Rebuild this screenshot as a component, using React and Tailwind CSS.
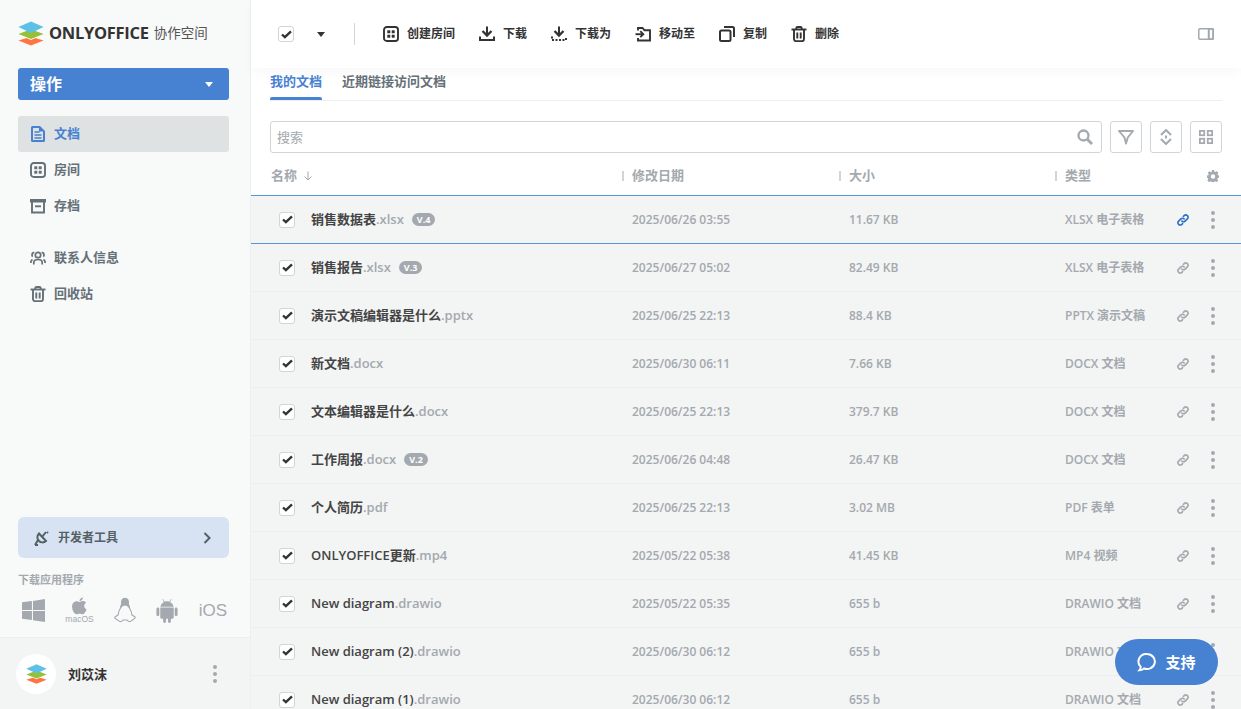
import React from "react";

const Logo = ({ className }) => (
  <svg viewBox="0 0 26 24" className={className}>
    <path d="M13 15.200 25.600 19 13 24 .4 19z" fill="#FF7541" />
    <path d="M13 8.200 25.600 13 13 18.400.4 13z" fill="#fff" />
    <path d="M13 7.800 25.600 12.600 13 17.600.4 12.600z" fill="#95C038" />
    <path d="M13 0 25.600 5.600 13 11.400.4 5.600z" fill="#5DC0E8" />
  </svg>
);

const S = ({ children, className = "w-4 h-4", sw = 2 }) => (
  <svg viewBox="0 0 16 16" fill="none" stroke="currentColor" strokeWidth={sw} className={className}>{children}</svg>
);

const DocIcon = () => (
  <svg viewBox="0 0 16 16" className="w-4 h-4">
    <path d="M2.500 0h7.500L15 5v9.500a1.500 1.500 0 0 1-1.500 1.500h-11A1.500 1.500 0 0 1 1 14.500v-13A1.500 1.500 0 0 1 2.500 0z" fill="#4781d1" />
    <path d="M3 2h6v3.500h4V14H3z" fill="#dfe2e3" />
    <path d="M4.500 6h5M4.500 9h7M4.500 12h7" stroke="#4781d1" strokeWidth="1.500" />
  </svg>
);
const RoomIcon = () => (
  <S sw={1.900}>
    <rect x="1" y="1" width="14" height="14" rx="2.800" />
    <g fill="currentColor" stroke="none"><rect x="4.300" y="4.300" width="3" height="3" rx=".4" /><rect x="8.700" y="4.300" width="3" height="3" rx=".4" /><rect x="4.300" y="8.700" width="3" height="3" rx=".4" /><rect x="8.700" y="8.700" width="3" height="3" rx=".4" /></g>
  </S>
);
const ArchiveIcon = () => (
  <S sw={1.900}>
    <path d="M0 1h16v3.500H0z" fill="currentColor" stroke="none" />
    <path d="M2 4v10.500h12V4" /><path d="M5 8.300h6" />
  </S>
);
const ContactIcon = () => (
  <S sw={1.700}>
    <circle cx="8" cy="5" r="2.700" />
    <path d="M3.800 14.500v-2c0-2 1.700-3 4.200-3s4.200 1 4.200 3v2" />
    <path d="M4.300 2.300C3 2.500 2 3.500 2 5c0 .7.300 1.300.7 1.700M11.700 2.300C13 2.500 14 3.500 14 5c0 .7-.3 1.300-.7 1.700M.8 13c0-1.800.6-3 1.700-3.500M15.200 13c0-1.800-.6-3-1.700-3.500" />
  </S>
);
const TrashIcon = () => (
  <S sw={1.900}>
    <path d="M.5 3.500h15" /><path d="M5.300 3V2.200A1.200 1.200 0 0 1 6.500 1h3a1.200 1.200 0 0 1 1.200 1.200V3" />
    <path d="M3 4v9a2.200 2.200 0 0 0 2.200 2.200h5.600A2.200 2.200 0 0 0 13 13V4M6.300 6.500v6M9.700 6.500v6" />
  </S>
);
const DownIcon = ({ dotted }) => (
  <S sw={2}>
    <path d="M8 .5v8" /><path d="M3.500 5 8 9.500 12.500 5" strokeWidth="2.300" />
    <path d="M1 10.500v3.500h14v-3.500" strokeDasharray={dotted ? "2 1.500" : undefined} />
  </S>
);
const MoveIcon = () => (
  <S sw={1.900}>
    <path d="M3 4.500V2h4.500l2 2.300H15v10.200H3V12" /><path d="M.5 8.200h7.500" /><path d="M5.300 5.200 8.300 8.200l-3 3" />
  </S>
);
const CopyIcon = () => (
  <S sw={2}>
    <rect x="1" y="4.500" width="10.500" height="10.500" rx="1.500" /><path d="M5 1h8.500A1.500 1.500 0 0 1 15 2.500V11" />
  </S>
);
const LinkIcon = ({ active }) => (
  <svg viewBox="0 0 16 16" fill="none" strokeWidth="2.100" strokeLinecap="round" stroke={active ? "#2e6fc8" : "#a3a9ae"} className="w-3 h-3">
    <path d="M6.500 9.500a3 3 0 0 0 4.300 0l3-3a3 3 0 0 0-4.300-4.300L8.500 3.200" />
    <path d="M9.500 6.500a3 3 0 0 0-4.300 0l-3 3a3 3 0 0 0 4.300 4.300l1-1" />
  </svg>
);
const Dots = () => (
  <span className="flex flex-col gap-[3px] items-center">
    <i className="block w-1 h-1 rounded-full bg-[#a3a9ae]" /><i className="block w-1 h-1 rounded-full bg-[#a3a9ae]" /><i className="block w-1 h-1 rounded-full bg-[#a3a9ae]" />
  </span>
);
const Check = () => (
  <span className="w-4 h-4 rounded-[3px] border border-[#d0d5da] bg-white flex items-center justify-center shrink-0">
    <svg viewBox="0 0 12 10" className="w-[11px] h-[9px]"><path d="M1 5l3.200 3L11 1.500" fill="none" stroke="#333" strokeWidth="2.600" /></svg>
  </span>
);
const Caret = ({ c = "#333" }) => (
  <svg viewBox="0 0 10 6" className="w-2 h-[5px]"><path d="M0 0h10L5 6z" fill={c} /></svg>
);

const nav = [
  ["文档", <DocIcon />, true],
  ["房间", <RoomIcon />],
  ["存档", <ArchiveIcon />],
];
const tools = [
  ["创建房间", <RoomIcon />, "w-[96px]"],
  ["下载", <DownIcon />, "w-[72px]"],
  ["下载为", <DownIcon dotted />, "w-[84px]"],
  ["移动至", <MoveIcon />, "w-[84px]"],
  ["复制", <CopyIcon />, "w-[72px]"],
  ["删除", <TrashIcon />, "w-[72px]"],
];
const rows = [
  ["销售数据表", ".xlsx", "V.4", "2025/06/26 03:55", "11.67 KB", "XLSX 电子表格", true],
  ["销售报告", ".xlsx", "V.3", "2025/06/27 05:02", "82.49 KB", "XLSX 电子表格"],
  ["演示文稿编辑器是什么", ".pptx", "", "2025/06/25 22:13", "88.4 KB", "PPTX 演示文稿"],
  ["新文档", ".docx", "", "2025/06/30 06:11", "7.66 KB", "DOCX 文档"],
  ["文本编辑器是什么", ".docx", "", "2025/06/25 22:13", "379.7 KB", "DOCX 文档"],
  ["工作周报", ".docx", "V.2", "2025/06/26 04:48", "26.47 KB", "DOCX 文档"],
  ["个人简历", ".pdf", "", "2025/06/25 22:13", "3.02 MB", "PDF 表单"],
  ["ONLYOFFICE更新", ".mp4", "", "2025/05/22 05:38", "41.45 KB", "MP4 视频"],
  ["New diagram", ".drawio", "", "2025/05/22 05:35", "655 b", "DRAWIO 文档"],
  ["New diagram (2)", ".drawio", "", "2025/06/30 06:12", "655 b", "DRAWIO 文档"],
  ["New diagram (1)", ".drawio", "", "2025/06/30 06:12", "655 b", "DRAWIO 文档"],
];

const Nav = ({ label, icon, active }) => (
  <div className={`h-9 flex items-center pl-3 gap-2 rounded-[3px] text-[13px] font-semibold ${active ? "bg-[#dfe2e3] text-[#4781d1]" : "text-[#657077]"}`}>
    <span className="w-4 h-4 flex">{icon}</span><span>{label}</span>
  </div>
);

const Sep = () => <span className="w-[2px] h-[10px] bg-[#d0d5da] mr-2" />;

export default function App() {
  return (
    <div className="w-[1241px] h-[709px] overflow-hidden flex relative bg-white text-[#333] font-['Open_Sans','Noto_Sans_CJK_SC',sans-serif]">
      <aside className="w-[251px] shrink-0 h-full flex flex-col bg-[#f8f9f9] border-r border-[#eceef1]">
        <div className="h-[68px] pl-[18px] flex items-center pb-[1px]">
          <Logo className="w-[26px] h-[25px] mr-[5px]" />
          <span className="text-[16.500px] font-bold text-[#333] tracking-[-0.3px]">ONLYOFFICE</span>
          <span className="text-[13.500px] text-[#555] ml-[5px]">协作空间</span>
        </div>
        <div className="ml-[18px] mr-[21px] h-8 rounded-[3px] bg-[#4781d1] flex items-center justify-between pl-3 pr-4 text-white text-[16px] font-bold">
          操作 <Caret c="#fff" />
        </div>
        <div className="ml-[18px] mr-[21px] mt-4 flex flex-col">
          {nav.map(([l, i, a]) => <Nav key={l} label={l} icon={i} active={a} />)}
          <div className="h-4" />
          <Nav label="联系人信息" icon={<ContactIcon />} />
          <Nav label="回收站" icon={<TrashIcon />} />
        </div>
        <div className="flex-1" />
        <div className="ml-[18px] mr-[21px] h-[41px] rounded-md bg-[#d7e3f3] flex items-center pl-4 pr-[18px] text-[12px] font-semibold text-[#555f65] shrink-0">
          <svg viewBox="0 0 16 16" className="w-4 h-4 mr-2" fill="none" stroke="#555f65" strokeWidth="2">
            <path d="M5 3.500 12 11a4.500 4.500 0 0 1-7-7.500z" /><path d="M8 7l4-5M1 15l3-5M4 15H1M13 2l1 1" />
          </svg>
          开发者工具
          <svg viewBox="0 0 8 12" className="w-2 h-3 ml-auto" fill="none" stroke="#555f65" strokeWidth="2"><path d="M1.500 1l5 5-5 5" /></svg>
        </div>
        <div className="mx-[18px] mt-[15px] text-[11px] leading-[14px] font-semibold text-[#a3a9ae]">下载应用程序</div>
        <div className="ml-[22px] mr-[23px] mt-[10px] h-[26px] flex items-center justify-between text-[#a3a9ae] shrink-0">
          <svg viewBox="0 0 22 22" className="w-[23px] h-[23px]" fill="#a3a9ae"><path d="M0 3.200 9.500 2v8.500H0zM10.500 1.800 22 0v10.500H10.500zM0 11.500h9.500V20L0 18.800zM10.500 11.500H22V22l-11.500-1.700z" /></svg>
          <span className="flex flex-col items-center">
            <svg viewBox="0 0 16 16" className="w-[17px] h-[18px]" fill="#a3a9ae"><path d="M11.200 0c.1 1.800-1.500 3.400-3.200 3.300C7.800 1.700 9.500.1 11.200 0zM8 4.200c.8 0 1.800-.8 3.200-.8 1.200 0 2.300.6 3 1.600-2.600 1.500-2.200 5.200.5 6.200-.8 2-2.400 4.600-4 4.600-1 0-1.500-.6-2.700-.6s-1.700.6-2.700.6C3 15.800 1 11.800 1 8.800c0-3.200 2-5.300 4.200-5.300 1.200 0 2.100.7 2.800.7z" /></svg>
            <span className="text-[8.500px] leading-[8px] font-['Liberation_Sans',sans-serif]">macOS</span>
          </span>
          <svg viewBox="0 0 22 26" className="w-[22px] h-[27px]" fill="none" stroke="#a3a9ae" strokeWidth="1.100">
            <path d="M7.800 8C6.500 11 3.800 14 4.300 17.200L1 19.500c-.6.800.2 1.400 1 1.900 1.500.8 3 2.800 4.500 2.800 1.200 0 2-1 2.500-1.700h4c.6.800 1.300 1.700 2.500 1.700 1.600 0 3-2 4.500-2.800.8-.5 1.500-1.100 1-1.900l-3.300-2.300C18.200 14 15.500 11 14.200 8" />
            <path d="M11 .7c-3 0-3.600 2.500-3.400 5.300.1 1.500-.8 2-1 3.500 1.500-.8 3-2 4.400-2s2.900 1.200 4.400 2c-.2-1.500-1.100-2-1-3.500.2-2.800-.4-5.300-3.400-5.300z" fill="#a3a9ae" />
          </svg>
          <svg viewBox="0 0 22 26" className="w-[22px] h-[25px]" fill="#a3a9ae"><path d="M6.800 1 8.400 3.700A8 8 0 0 1 13.600 3.700L15.200 1l.6.400-1.600 2.700A6.800 6.800 0 0 1 18 9H4a6.800 6.800 0 0 1 3.800-4.900L6.200 1.400zM4 10h14v10a1.500 1.500 0 0 1-1.500 1.500H15v3a1.500 1.500 0 0 1-3 0v-3h-2v3a1.500 1.500 0 0 1-3 0v-3H5.500A1.500 1.500 0 0 1 4 20zM1.500 10A1.500 1.500 0 0 1 3 11.500v6a1.500 1.500 0 0 1-3 0v-6A1.500 1.500 0 0 1 1.500 10zM20.500 10a1.500 1.500 0 0 1 1.500 1.500v6a1.500 1.500 0 0 1-3 0v-6a1.500 1.500 0 0 1 1.500-1.500z" /></svg>
          <span className="text-[17px] font-['Liberation_Sans',sans-serif] leading-none">iOS</span>
        </div>
        <div className="h-[72px] mt-[14px] shrink-0 border-t border-[#eceef1] bg-[#f3f4f4] flex items-center pl-4 pr-[33px]">
          <span className="w-10 h-10 rounded-full bg-white flex items-center justify-center"><Logo className="w-[21px] h-[20px]" /></span>
          <span className="ml-3 pt-[2px] text-[13px] font-semibold text-[#333]">刘苡沫</span>
          <span className="ml-auto"><Dots /></span>
        </div>
      </aside>

      <main className="flex-1 min-w-0 h-full flex flex-col">
        <div className="h-[68px] shrink-0 bg-white flex items-center pl-[27px] pr-[27px] shadow-[0_4px_12px_rgba(4,15,27,0.03)] relative">
          <Check />
          <span className="ml-[23px]"><Caret /></span>
          <span className="w-px h-[22px] bg-[#d0d5da] ml-[29px] mr-[28px]" />
          {tools.map(([l, i, w]) => (
            <span key={l} className={`flex items-center gap-2 text-[12px] font-semibold text-[#333] ${w}`}>
              <span className="w-4 h-4 flex">{i}</span>{l}
            </span>
          ))}
          <svg viewBox="0 0 16 12" className="w-4 h-3 ml-auto" fill="none" stroke="#a3a9ae" strokeWidth="1.500"><rect x=".8" y=".8" width="14.400" height="10.400" rx="1" /><path d="M10.500 1v10" strokeWidth="1.500" /><path d="M11 1h4v10h-4z" fill="none" /></svg>
        </div>
        <div className="ml-[19px] mr-[19px] h-[33px] flex gap-5 border-b border-[#eceef1] text-[13px] font-semibold leading-[26px] shrink-0">
          <span className="relative text-[#4781d1]">我的文档<span className="absolute left-0 right-0 bottom-0 h-[3px] rounded-t-[2px] bg-[#4781d1]" /></span>
          <span className="text-[#657077]">近期链接访问文档</span>
        </div>
        <div className="ml-[19px] mr-[19px] mt-5 flex gap-2 shrink-0">
          <div className="flex-1 h-8 border border-[#d0d5da] rounded-[3px] flex items-center justify-between pl-[6px] pr-2 text-[13px] text-[#a3a9ae]">
            <span className="pt-[1px]">搜索</span>
            <svg viewBox="0 0 16 16" className="w-4 h-4" fill="none" stroke="#a3a9ae" strokeWidth="2.300"><circle cx="6.500" cy="6.500" r="5" /><path d="M10 10l5 5" strokeWidth="2.800" /></svg>
          </div>
          <span className="w-8 h-8 border border-[#d0d5da] rounded-[3px] flex items-center justify-center">
            <svg viewBox="0 0 16 16" className="w-4 h-4" fill="none" stroke="#a3a9ae" strokeWidth="1.900"><path d="M1 2h14L9.800 8.500 8 14.500 6.500 8.500z" strokeLinejoin="round" /></svg>
          </span>
          <span className="w-8 h-8 border border-[#d0d5da] rounded-[3px] flex items-center justify-center">
            <svg viewBox="0 0 16 16" className="w-4 h-4" fill="none" stroke="#a3a9ae" strokeWidth="2"><path d="M3 6l5-5 5 5M3 10l5 5 5-5" /><path d="M8 6.500v3" /></svg>
          </span>
          <span className="w-8 h-8 border border-[#d0d5da] rounded-[3px] flex items-center justify-center">
            <svg viewBox="0 0 16 16" className="w-[14px] h-[14px]" fill="none" stroke="#a3a9ae" strokeWidth="2"><rect x="1" y="1" width="5" height="5" /><rect x="10" y="1" width="5" height="5" /><rect x="1" y="10" width="5" height="5" /><rect x="10" y="10" width="5" height="5" /></svg>
          </span>
        </div>
        <div className="h-[43px] pt-1 shrink-0 flex items-center pl-5 border-b border-[#5596dc] text-[13px] font-semibold text-[#a3a9ae]">
          <span className="w-[351px] flex items-center gap-[6px]">名称
            <svg viewBox="0 0 10 10" className="w-[10px] h-[10px]" fill="none" stroke="#a3a9ae"><path d="M5 .5v8.500M1.500 5.500 5 9l3.500-3.500" /></svg>
          </span>
          <span className="w-[217px] flex items-center"><Sep />修改日期</span>
          <span className="w-[216px] flex items-center"><Sep />大小</span>
          <span className="flex items-center"><Sep />类型</span>
          <svg viewBox="0 0 16 16" className="w-3 h-3 ml-auto mr-[22px]" fill="#a3a9ae"><path fillRule="evenodd" d="M6.500 0h3l.4 2.200 1.300.6L13.100 1.600l2.100 2.100-1.200 1.900.6 1.300L16.500 7.400v3l-2.200.4-.6 1.300 1.200 1.900-2.100 2.100-1.900-1.200-1.300.6-.4 2.200h-3l-.4-2.200-1.300-.6-1.900 1.200L.500 13.900l1.200-1.900-.6-1.300L-.500 10.400v-3l2.200-.4.600-1.300L1.100 3.800 3.200 1.700l1.900 1.200 1.300-.6zM8 5.500a3 3 0 1 0 0 6 3 3 0 0 0 0-6z" /></svg>
        </div>
        <div className="flex-1 min-h-0 overflow-hidden">
          {rows.map(([n, e, v, d, s, t, a]) => (
            <div key={n} className={`h-12 flex items-center bg-[#f3f4f4] border-b ${a ? "border-[#5596dc]" : "border-[#eceef1]"} text-[12px] font-semibold text-[#a3a9ae]`}>
              <span className="w-[60px] pl-7"><Check /></span>
              <span className="w-[321px] flex items-center text-[13px] text-[#444]">
                {n}<span className="text-[#a3a9ae]">{e}</span>
                {v && <span className="ml-2 h-[13px] px-[5px] rounded-full bg-[#a3a9ae] text-white text-[9px] font-bold leading-[13px]">{v}</span>}
              </span>
              <span className="w-[217px]">{d}</span>
              <span className="w-[216px]">{s}</span>
              <span className="w-[112px]">{t}</span>
              <span className="w-3 flex"><LinkIcon active={a} /></span>
              <span className="ml-[22px]"><Dots /></span>
            </div>
          ))}
        </div>
      </main>

      <div className="absolute left-[1115px] top-[639px] w-[103px] h-[46px] rounded-full bg-[#4781d1] text-white flex items-center justify-center gap-2 text-[15px] font-bold">
        <svg viewBox="0 0 20 20" className="w-5 h-5" fill="none" stroke="#fff" strokeWidth="2"><path d="M10 2a8 7.500 0 1 1-3 14.500c-1 1.300-3 1.700-4.500 1.700 1-1 1.300-2 1.200-3.500A7.500 7.500 0 0 1 10 2z" /></svg>
        支持
      </div>
    </div>
  );
}
